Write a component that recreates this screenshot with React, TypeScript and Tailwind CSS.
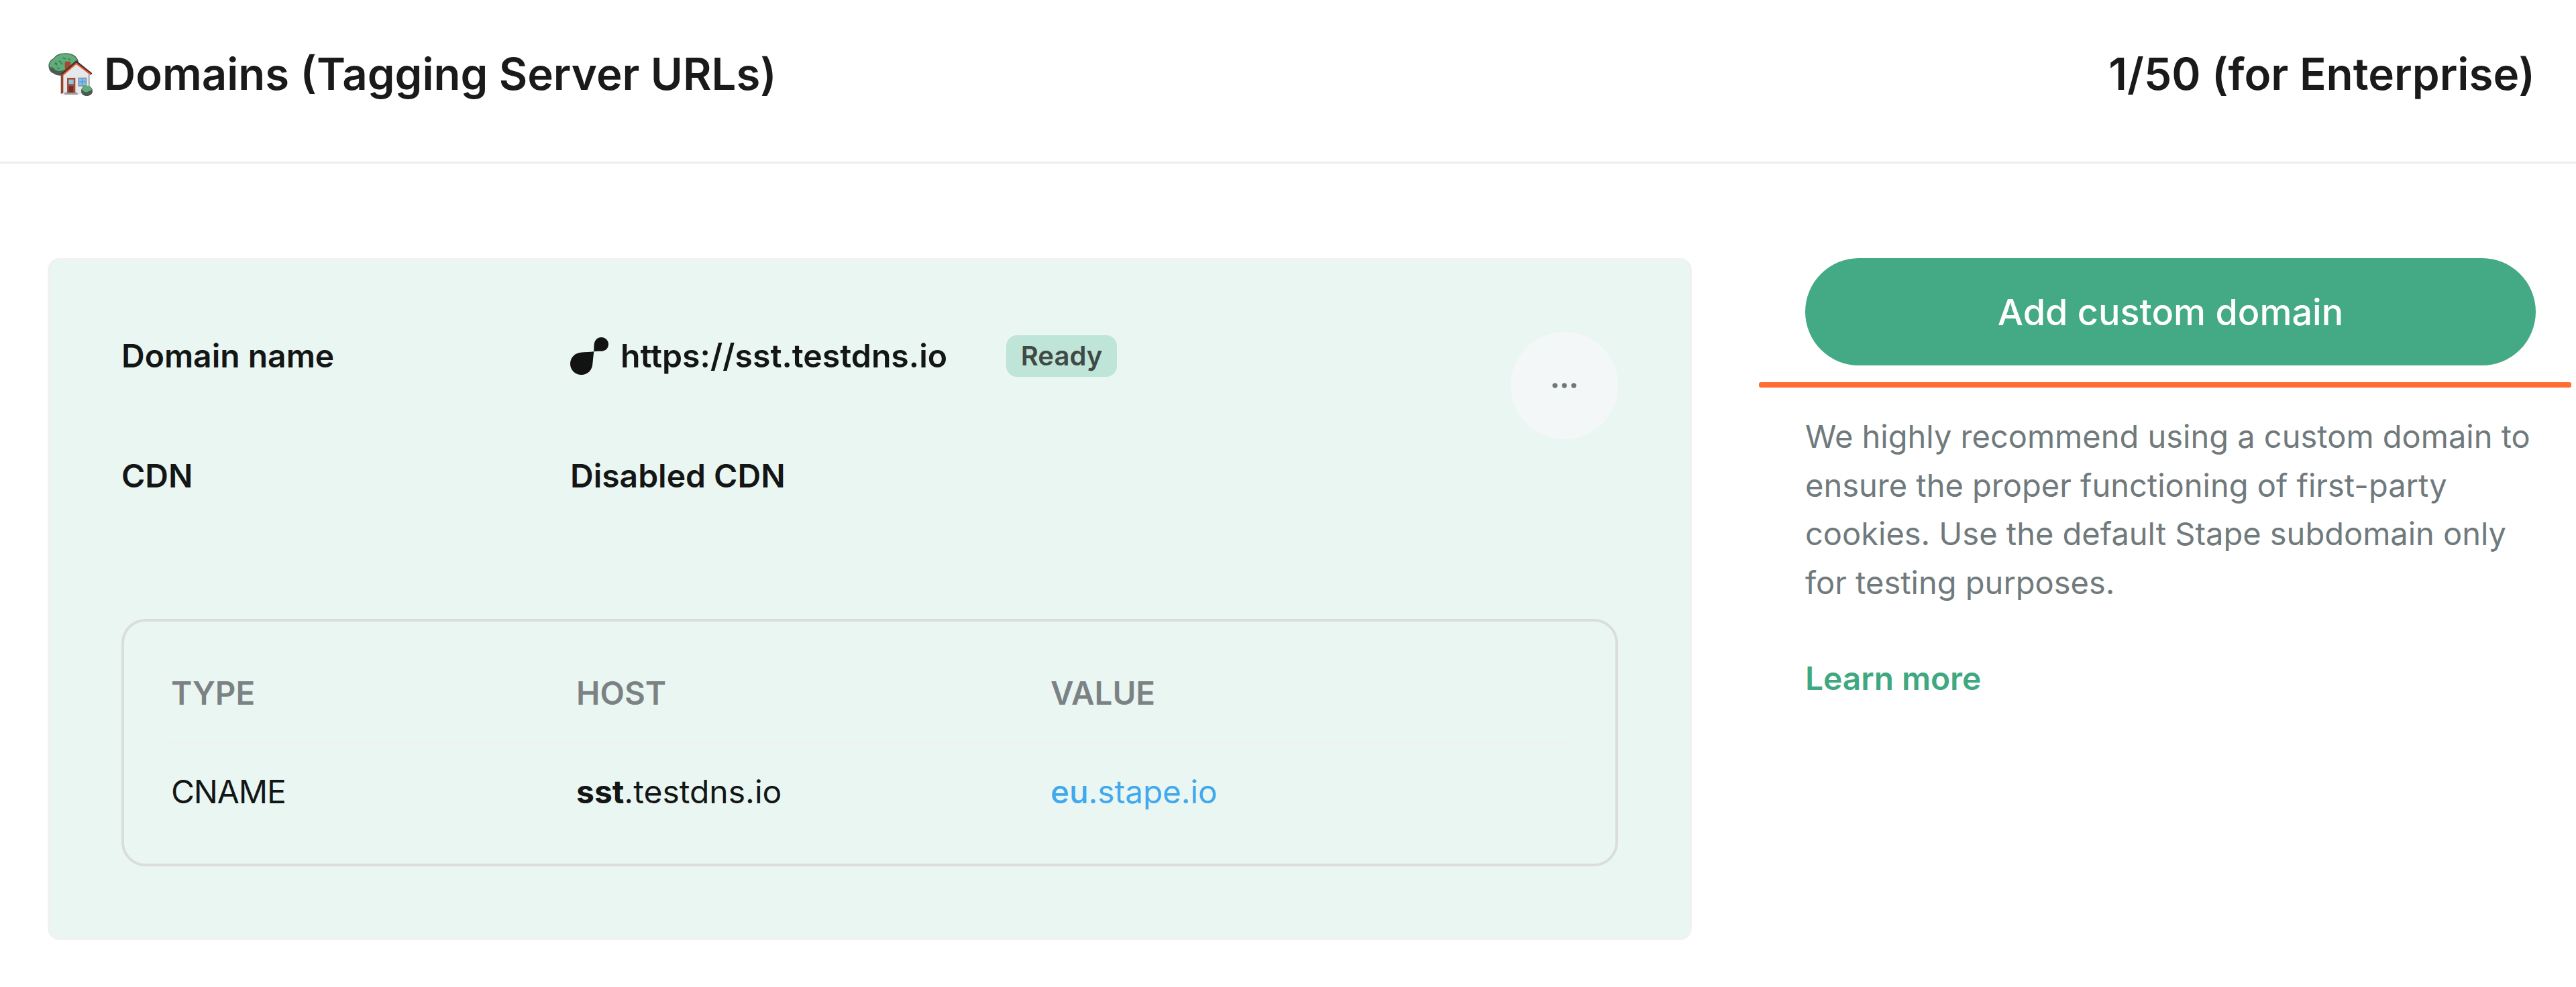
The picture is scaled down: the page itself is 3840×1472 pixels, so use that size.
import clsx from "clsx"

const records = [
  { type: "CNAME", host: "sst", domain: ".testdns.io", value: "eu", valueDomain: ".stape.io" },
]

const HouseIcon = ({ className }: { className?: string }) => (
  <svg viewBox="90 80 210 204" className={className} aria-hidden="true">
    <path d="M98 150c-4-20 8-34 22-40 8-16 32-26 58-23 24 0 42 12 50 28 6 12 4 40-10 52l-50 18c-20 4-36 2-46-6-14-4-23-16-24-29z" fill="#4f5b52" />
    <path d="M101 142c0-15 10-26 22-30 10-16 32-24 54-22 24 1 40 12 47 26 4 14-2 26-16 32-12 18-34 12-50 16-16 8-30-2-38-8-10-2-18-6-19-14z" fill="#5fae79" />
    <path d="M112 150l8 6m6-22l8 6m10-18l8 4m-16 26l10 4m6-26l8 6m2-28l10 4m14 0l8 4m-66 14l6 4m-10 30l10 4" stroke="#3d6a51" strokeWidth="4" strokeLinecap="round" />
    <path d="M152 182l14 2v82l-14 2z" fill="#94452f" />
    <path d="M170 124h26v22l-26 20z" fill="#a14a33" />
    <path d="M163 184l58-50 58 48v86l-50 4h-66z" fill="#e4e8ea" />
    <path d="M274 180l8 6v70l-8 6z" fill="#b5babd" />
    <path d="M156 184l65-58 68 55" fill="none" stroke="#3b3232" strokeWidth="11" />
    <path d="M159 186l62-53 66 50" fill="none" stroke="#e8552a" strokeWidth="6.5" />
    <path d="M168 262h56l6 11h-62z" fill="#9a9fa3" />
    <path d="M180 197h37v68h-37z" fill="#a34e3a" />
    <path d="M187 205h22v20h-22z" fill="#8cc7e0" />
    <path d="M188 234h20v26h-20z" fill="#6f3026" />
    <path d="M229 196h39v40h-39z" fill="#8f969b" />
    <path d="M234 201h29v29h-29z" fill="#79c0f0" />
    <path d="M248 201v29M234 215h29" stroke="#4b8fd2" strokeWidth="3" />
    <path d="M243 256c0-14 10-24 25-24s26 10 26 24c0 13-11 22-26 22s-25-8-25-22z" fill="#4a5a50" />
    <path d="M246 249c2-10 10-16 22-16s21 6 23 16c-4 8-12 6-20 12-8 2-20-2-25-12z" fill="#5fae79" />
  </svg>
)

const StapeIcon = ({ className }: { className?: string }) => (
  <svg viewBox="28 41 171 168" className={className} aria-hidden="true">
    <path d="M134 105C134 92 134 82 135 72C137 54 150 41 167 41C185 41 199 55 199 72C199 90 186 103 168 103C156 103 146 103 134 105Z" fill="#111313" />
    <path d="M134 105C131 126 130 142 128 160C126 188 106 209 78 209C50 209 28 187 28 160C28 132 48 112 74 109C96 107 115 107 134 105Z" fill="#111313" />
  </svg>
)

const DotsIcon = ({ className }: { className?: string }) => (
  <svg viewBox="0 0 36 8" className={className} fill="currentColor" aria-hidden="true">
    <circle cx="4" cy="4" r="3.7" />
    <circle cx="18" cy="4" r="3.7" />
    <circle cx="32" cy="4" r="3.7" />
  </svg>
)

const InfoRow = ({ label, children, className }: { label: string; children: React.ReactNode; className?: string }) => (
  <div className={clsx("flex h-[72px] items-center", className)}>
    <p className="w-[669px]">{label}</p>
    {children}
  </div>
)

const DnsTable = () => (
  <div className="h-[369px] rounded-[36px] border-4 border-[#d9dddf] px-[70px] pt-[71px] leading-[72px]">
    <div className="grid grid-cols-[604px_707px_1fr] border-b-[3px] border-[#eff1f0] pb-9 text-[47.5px] font-semibold text-[#7c8284]">
      <p>TYPE</p>
      <p>HOST</p>
      <p>VALUE</p>
    </div>
    {records.map((record) => (
      <div key={record.host} className="grid grid-cols-[604px_707px_1fr] pt-9 text-[48px]">
        <p className="tracking-tight">{record.type}</p>
        <p><b className="font-bold">{record.host}</b>{record.domain}</p>
        <a className="text-[47.6px] text-[#40a9ee]"><span className="font-medium">{record.value}</span>{record.valueDomain}</a>
      </div>
    ))}
  </div>
)

const DomainCard = () => (
  <section className="h-[1017px] w-[2451px] rounded-[18px] border-[3px] border-[#f1f1f1] bg-[#eaf6f2] px-[107px] pt-[107px]">
    <div className="flex h-[428px] items-start justify-between">
      <div className="text-[48px] font-semibold leading-[72px]">
        <InfoRow label="Domain name">
          <StapeIcon className="mr-[18px] h-14 w-[57px]" />
          <p className="w-[575px] text-[48.2px]">https://sst.testdns.io</p>
          <span className="flex h-[62px] w-[165px] items-center justify-center rounded-2xl bg-[#bee5d8] text-[40px] text-[#414846]">Ready</span>
        </InfoRow>
        <InfoRow label="CDN" className="mt-[107px]">
          <p>Disabled CDN</p>
        </InfoRow>
      </div>
      <button className="flex size-40 items-center justify-center rounded-full bg-[#f4f7f8] text-[#6f7678]">
        <DotsIcon className="h-2 w-9" />
      </button>
    </div>
    <DnsTable />
  </section>
)

export default function App() {
  return (
    <main className="h-[1472px] w-[3840px] overflow-hidden bg-white font-['Inter',sans-serif] text-[#141616]">
      <header className="flex h-[244px] items-center justify-between border-b-[3px] border-[#e9eeed] pb-5 pl-[70px] pr-[61px] text-[65.3px] font-semibold text-[#1a1a1a]">
        <h1 className="flex items-center gap-[15px]">
          <HouseIcon className="h-[68px] w-[70px]" />
          Domains (Tagging Server URLs)
        </h1>
        <p className="text-[65.6px]">1/50 (for Enterprise)</p>
      </header>
      <div className="flex items-start pl-[71px] pt-[141px]">
        <DomainCard />
        <aside className="ml-[169px] w-[1089px] text-[47px] leading-[72.5px]">
          <button className="flex h-40 w-full items-center justify-center rounded-full bg-[#43aa85] pt-0.5 text-[54px] font-medium text-white">
            Add custom domain
          </button>
          <div className="-ml-[69px] mt-[25px] h-2 w-[1211px] rounded-[3px] bg-[#ff6d33]" />
          <p className="mt-[37px] text-[#707a7c]">
            We highly recommend using a custom domain to ensure the proper functioning of first-party cookies. Use the default Stape subdomain only for testing purposes.
          </p>
          <a className="mt-[71px] block text-[47.8px] font-semibold text-[#3fa881]">Learn more</a>
        </aside>
      </div>
    </main>
  )
}
